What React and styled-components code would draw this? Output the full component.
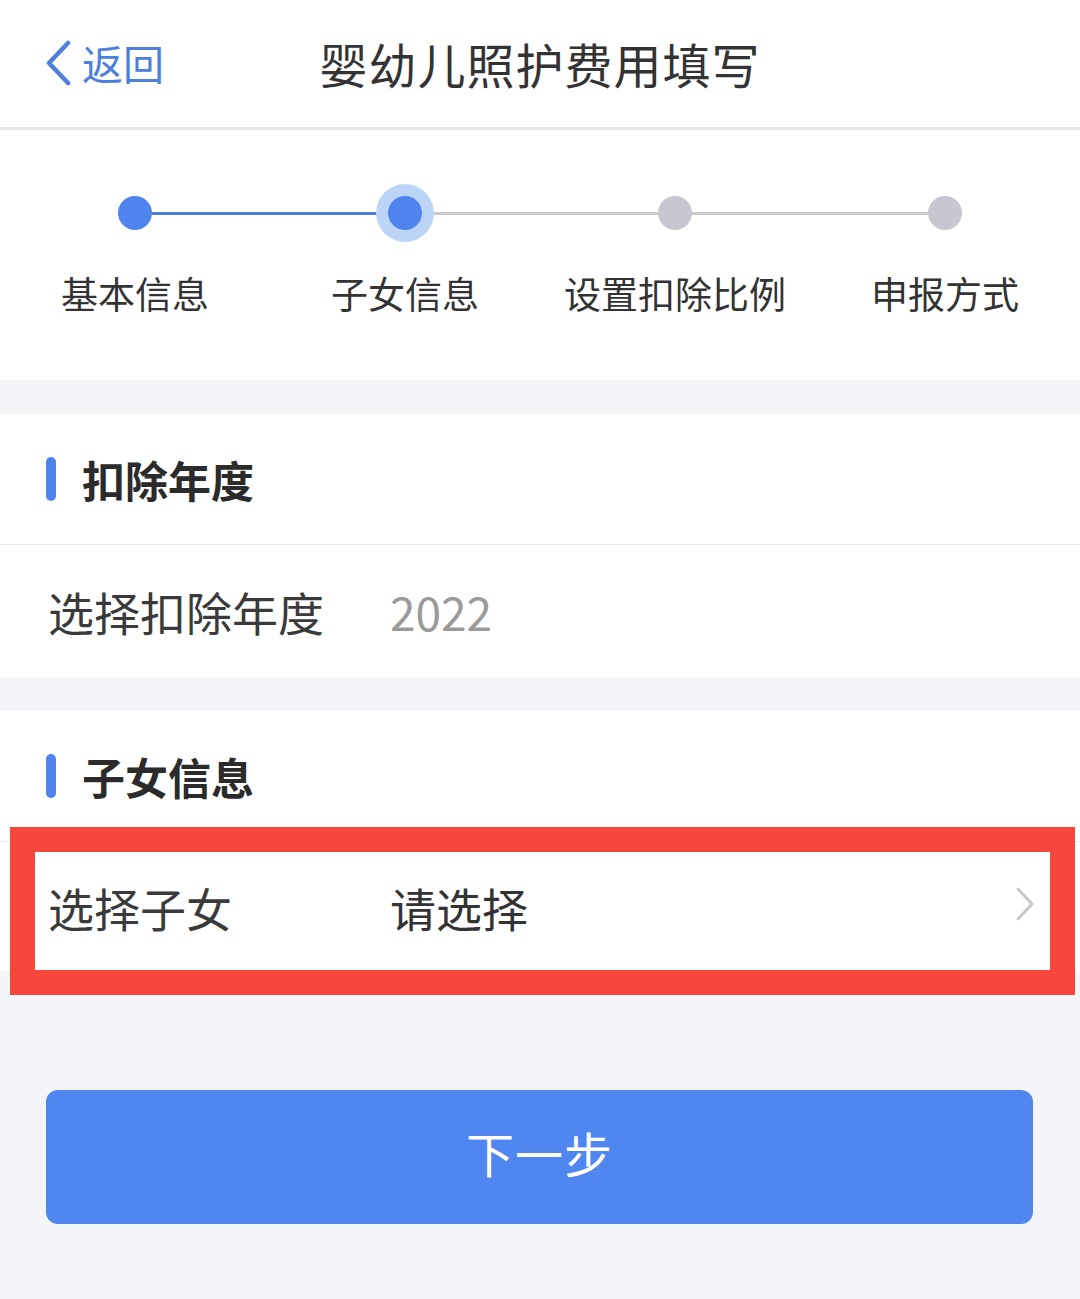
import styled, { createGlobalStyle } from "styled-components"

const GlobalStyle = createGlobalStyle`
  html, body {
    margin: 0;
    padding: 0;
    background: #f3f5f8;
  }
  body {
    font-family: "Noto Sans CJK SC", "Noto Sans", sans-serif;
    color: #333;
  }
`

const Page = styled.div`
  width: 1080px;
  min-height: 1299px;
  background: #f3f5f8;
`

const Header = styled.div`
  height: 130px;
  box-sizing: border-box;
  padding-bottom: 2px;
  background: #fff;
  border-bottom: 3px solid #e6e7ea;
  display: grid;
  grid-template-columns: 260px 1fr 260px;
  align-items: center;
`

const Back = styled.div`
  display: flex;
  align-items: center;
  gap: 10px;
  padding-left: 44px;
  color: #4d80dc;
  font-size: 41px;
  line-height: 1;
`

const Title = styled.div`
  text-align: center;
  font-size: 48px;
  line-height: 1;
  color: #333;
  letter-spacing: 1px;
`

const StepsPanel = styled.div`
  height: 250px;
  background: #fff;
  display: grid;
  grid-template-columns: repeat(4, 270px);
`

const Step = styled.div`
  display: flex;
  flex-direction: column;
  align-items: center;
`

const Track = styled.div`
  width: 100%;
  height: 34px;
  margin-top: 66px;
  display: flex;
  align-items: center;
`

const Line = styled.div`
  flex: 1;
  height: 3px;
  background: ${p => p.$tone === "blue" ? "#4a7fd4" : p.$tone === "grey" ? "#cbcbcf" : "transparent"};
`

const Dot = styled.div`
  width: 34px;
  height: 34px;
  border-radius: 50%;
  background: ${p => p.$done ? "#4f84ee" : "#c6c7d1"};
  box-shadow: ${p => p.$active ? "0 0 0 12px #bcd4f6" : "none"};
  position: relative;
  z-index: 1;
`

const StepLabel = styled.div`
  margin-top: 45px;
  font-size: 37px;
  line-height: 1;
  color: #333;
`

const Card = styled.div`
  background: #fff;
  margin-top: ${p => p.$gap}px;
`

const SectionHead = styled.div`
  height: 130px;
  display: flex;
  align-items: center;
  gap: 26px;
  padding-left: 46px;
  border-bottom: 1px solid #e9eaed;
  font-size: 43px;
  font-weight: 700;
  color: #2b2b2b;
`

const Bar = styled.span`
  width: 10px;
  height: 44px;
  border-radius: 5px;
  background: #4f84ee;
`

const Row = styled.div`
  position: relative;
  height: ${p => p.$h}px;
  display: flex;
  align-items: center;
  padding: 0 48px;
  font-size: 46px;
  line-height: 1;
`

const RowLabel = styled.span`
  width: 342px;
  color: #3a3a3a;
`

const RowValue = styled.span`
  flex: 1;
  color: ${p => p.$muted ? "#9a9a9a" : "#333"};
`

const Chevron = styled.svg`
  width: 20px;
  height: 34px;
  margin-right: -3px;
  margin-top: -6px;
`

const RedFrame = styled.div`
  position: absolute;
  top: -15px;
  left: 10px;
  right: 5px;
  bottom: -24px;
  border: 25px solid #f7463b;
  pointer-events: none;
`

const Footer = styled.div`
  padding: 119px 47px 0 46px;
`

const NextButton = styled.button`
  width: 100%;
  height: 134px;
  padding: 0 0 10px;
  border: none;
  border-radius: 12px;
  background: #4f86f0;
  color: #fff;
  font-family: inherit;
  font-size: 48px;
  line-height: 1;
  letter-spacing: 1px;
`

const steps = [
  { label: "基本信息", left: "none", right: "blue", done: true },
  { label: "子女信息", left: "blue", right: "grey", done: true, active: true },
  { label: "设置扣除比例", left: "grey", right: "grey" },
  { label: "申报方式", left: "grey", right: "none" },
]

const App = () => {
  return (
    <Page>
      <GlobalStyle />
      <Header>
        <Back>
          <svg width="28" height="46" viewBox="0 0 28 46">
            <polyline points="24,3 5,23 24,43" fill="none" stroke="#4d80dc" strokeWidth="4.5" strokeLinecap="round" strokeLinejoin="round" />
          </svg>
          返回
        </Back>
        <Title>婴幼儿照护费用填写</Title>
        <div />
      </Header>

      <StepsPanel>
        {steps.map(s => (
          <Step key={s.label}>
            <Track>
              <Line $tone={s.left} />
              <Dot $done={s.done} $active={s.active} />
              <Line $tone={s.right} />
            </Track>
            <StepLabel>{s.label}</StepLabel>
          </Step>
        ))}
      </StepsPanel>

      <Card $gap={34}>
        <SectionHead><Bar />扣除年度</SectionHead>
        <Row $h={132}>
          <RowLabel>选择扣除年度</RowLabel>
          <RowValue $muted>2022</RowValue>
        </Row>
      </Card>

      <Card $gap={34}>
        <SectionHead><Bar />子女信息</SectionHead>
        <Row $h={129}>
          <RowLabel>选择子女</RowLabel>
          <RowValue>请选择</RowValue>
          <Chevron viewBox="0 0 20 34">
            <polyline points="3,2 17,17 3,32" fill="none" stroke="#c9c9cc" strokeWidth="3" strokeLinecap="round" strokeLinejoin="round" />
          </Chevron>
          <RedFrame />
        </Row>
      </Card>

      <Footer>
        <NextButton>下一步</NextButton>
      </Footer>
    </Page>
  )
}

export default App
